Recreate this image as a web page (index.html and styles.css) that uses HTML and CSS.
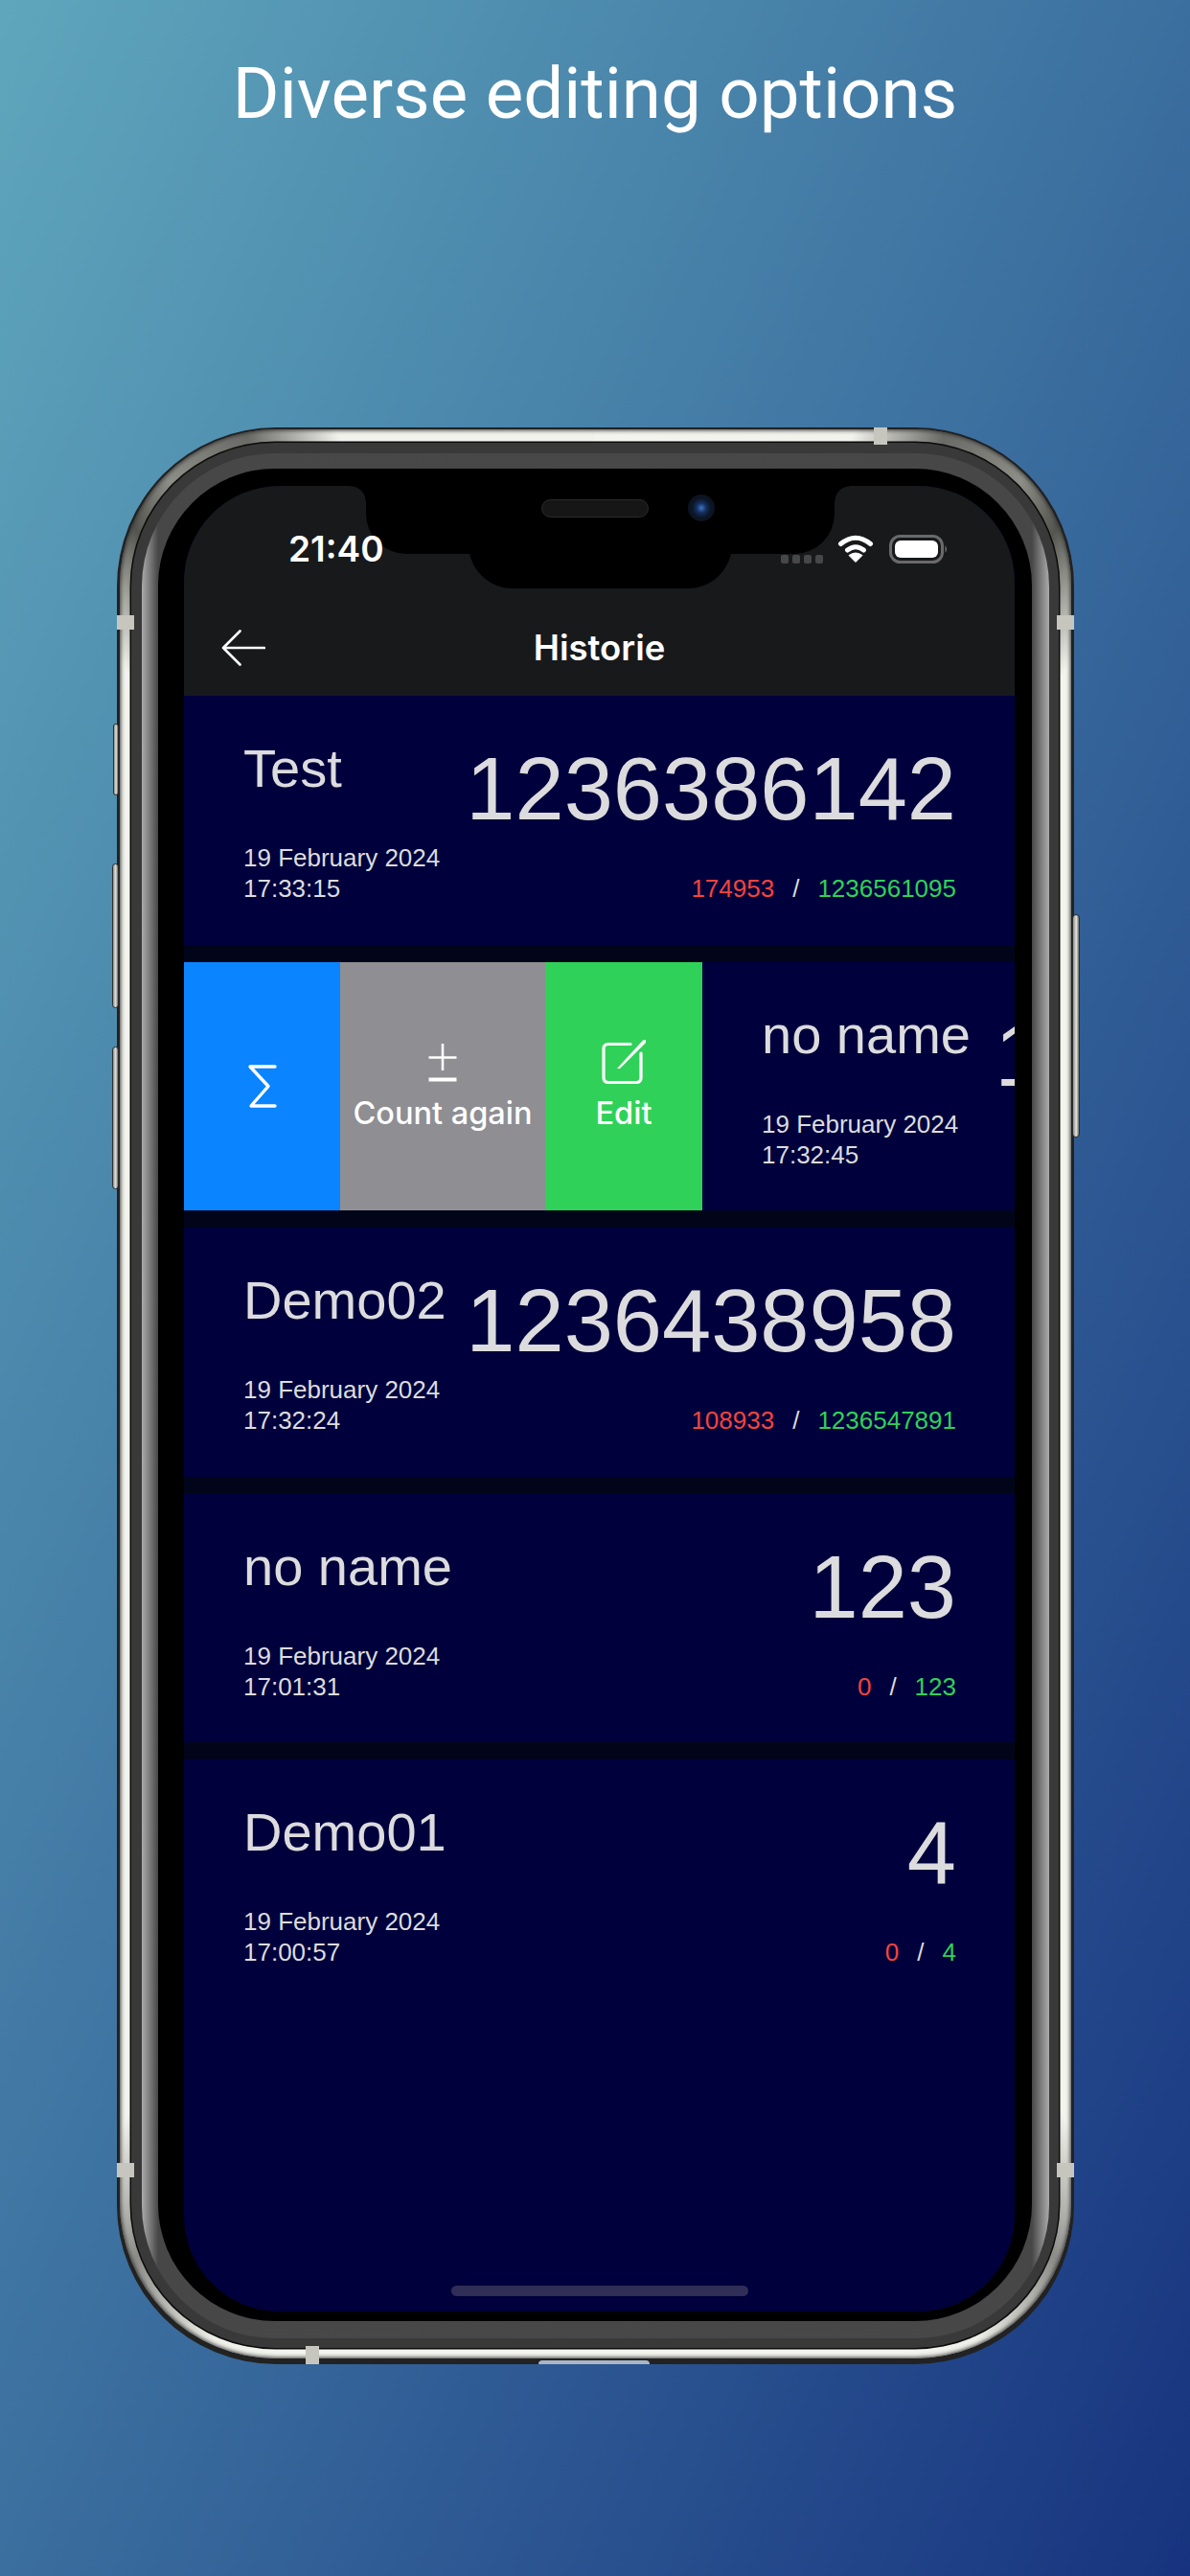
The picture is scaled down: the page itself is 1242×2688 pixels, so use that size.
FILE: index.html
```html
<!DOCTYPE html>
<html lang="en">
<head>
<meta charset="utf-8">
<title>Diverse editing options</title>
<link rel="stylesheet" href="styles.css">
</head>
<body>
<h1 class="headline">Diverse editing options</h1>
<div class="device">
  <span class="side-btn side-btn--mute"></span>
  <span class="side-btn side-btn--up"></span>
  <span class="side-btn side-btn--down"></span>
  <span class="side-btn side-btn--power"></span>
  <div class="rim">
    <div class="steel">
      <div class="ring">
        <div class="bezel">
          <div class="glass">
            <div class="screen">
              <div class="notch">
                <div class="notch-chin"></div>
                <span class="speaker"></span>
                <span class="camera"></span>
              </div>
              <header class="topbar">
                <div class="status">
                  <span class="clock">21:40</span>
                  <div class="status-icons">
                    <div class="signal"><i></i><i></i><i></i><i></i></div>
                    <svg class="wifi" width="38" height="29" viewBox="0 0 38 29"><path d="M3.5 9.5Q19-3 34.500 9.500" fill="none" stroke="#fff" stroke-width="5" stroke-linecap="round"/><path d="M10.500 16Q19 9.500 27.500 16" fill="none" stroke="#fff" stroke-width="5" stroke-linecap="round"/><path d="M19 28.500L12 21.500Q19 16.500 26 21.500Z" fill="#fff" stroke="#fff" stroke-linejoin="round"/></svg>
                    <svg class="battery" width="62" height="30" viewBox="0 0 62 30"><rect x="1.500" y="1.500" width="54" height="27" rx="10" fill="none" stroke="#6a6a6c" stroke-width="3"/><rect x="6" y="6" width="45" height="18" rx="6" fill="#fff"/><path d="M58.500 11Q61.500 15 58.500 19Z" fill="#77777a"/></svg>
                  </div>
                </div>
                <nav class="navbar">
                  <svg class="back" width="46" height="38" viewBox="0 0 46 38"><path d="M45 19H2M19.500 1.500L2 19L19.500 36.500" fill="none" stroke="#fff" stroke-width="2.600" stroke-linecap="round" stroke-linejoin="round"/></svg>
                  <span class="title">Historie</span>
                </nav>
              </header>
              <main class="list">
                <article class="row">
                  <div class="cell">
                    <div class="meta"><div class="name">Test</div><div class="stamp">19 February 2024</div><div class="stamp">17:33:15</div></div>
                    <div class="totals"><div class="total">1236386142</div><div class="split"><span class="minus">174953</span><span class="sep">/</span><span class="plus">1236561095</span></div></div>
                  </div>
                </article>
                <article class="row">
                  <button class="action action--sum">
                    <svg width="30" height="46" viewBox="0 0 30 46"><path d="M28 3H2L21 23.500L3 44H28" fill="none" stroke="#fff" stroke-width="3.400" stroke-linecap="round" stroke-linejoin="round"/></svg>
                  </button>
                  <button class="action action--again">
                    <svg class="action-icon" width="32" height="50" viewBox="0 0 32 50"><path d="M16 5V33M1.500 19.500H30.500" fill="none" stroke="#fff" stroke-width="2.600"/><path d="M1.500 42.500H30.500" fill="none" stroke="#fff" stroke-width="4"/></svg>
                    <span class="action-label">Count again</span>
                  </button>
                  <button class="action action--edit">
                    <svg class="action-icon action-icon--edit" width="48" height="50" viewBox="0 0 48 50"><path d="M31 5.500H8Q3 5.500 3 10.500V40.500Q3 45.500 8 45.500H37Q42 45.500 42 40.500V15" fill="none" stroke="#fff" stroke-width="3.200" stroke-linecap="round"/><path d="M17 31L44 1.500L47 1L47 4L20 31Z" fill="#fff"/></svg>
                    <span class="action-label">Edit</span>
                  </button>
                  <div class="cell cell--swiped">
                    <div class="meta"><div class="name">no name</div><div class="stamp">19 February 2024</div><div class="stamp">17:32:45</div></div>
                    <div class="totals"><div class="total">1236386142</div><div class="split"><span class="minus">174953</span><span class="sep">/</span><span class="plus">1236561095</span></div></div>
                  </div>
                </article>
                <article class="row">
                  <div class="cell">
                    <div class="meta"><div class="name">Demo02</div><div class="stamp">19 February 2024</div><div class="stamp">17:32:24</div></div>
                    <div class="totals"><div class="total">1236438958</div><div class="split"><span class="minus">108933</span><span class="sep">/</span><span class="plus">1236547891</span></div></div>
                  </div>
                </article>
                <article class="row">
                  <div class="cell">
                    <div class="meta"><div class="name">no name</div><div class="stamp">19 February 2024</div><div class="stamp">17:01:31</div></div>
                    <div class="totals"><div class="total">123</div><div class="split"><span class="minus">0</span><span class="sep">/</span><span class="plus">123</span></div></div>
                  </div>
                </article>
                <article class="row">
                  <div class="cell">
                    <div class="meta"><div class="name">Demo01</div><div class="stamp">19 February 2024</div><div class="stamp">17:00:57</div></div>
                    <div class="totals"><div class="total">4</div><div class="split"><span class="minus">0</span><span class="sep">/</span><span class="plus">4</span></div></div>
                  </div>
                </article>
              </main>
              <div class="home-bar"></div>
            </div>
          </div>
        </div>
      </div>
    </div>
  </div>
  <span class="band band--top"></span>
  <span class="band band--bottom"></span>
  <span class="band band--lt"></span>
  <span class="band band--rt"></span>
  <span class="band band--lb"></span>
  <span class="band band--rb"></span>
  <span class="port"></span>
</div>
</body>
</html>
```
FILE: styles.css
```css
* { box-sizing: border-box; }
html, body { margin: 0; padding: 0; }
body {
  width: 1242px;
  height: 2688px;
  overflow: hidden;
  background: linear-gradient(to bottom right, #5fa6bc 0%, #3b6f9f 50%, #17337f 100%);
  font-family: "Liberation Sans", Arial, sans-serif;
}
.headline {
  margin: 0;
  padding-top: 53px;
  font: 400 74.5px/90px Roboto, "Liberation Sans", sans-serif;
  color: #fff;
  text-align: center;
}
.device {
  position: relative;
  width: 999px;
  height: 2021px;
  margin: 303px 0 0 122px;
}
.rim {
  height: 100%;
  padding: 2px 3px 6px;
  border-radius: 166px;
  background: #222;
}
.steel {
  height: 100%;
  padding: 14px 13px 11px 12px;
  border-radius: 163px;
  background: conic-gradient(#f4f4ef 0deg, #f2f2ed 15deg, #6a6a66 20deg, #8e8e88 25deg, #55554f 28deg, #f4f4ef 33deg, #f4f4ef 147deg, #8c8c88 152deg, #efefe9 158deg, #f4f4ef 162deg, #f4f4ef 198deg, #efefe9 202deg, #8c8c88 208deg, #f4f4ef 213deg, #f4f4ef 327deg, #55554f 332deg, #8e8e88 335deg, #6a6a66 340deg, #f2f2ed 345deg);
  box-shadow: inset 0 0 4px 1px #333;
}
.ring {
  height: 100%;
  padding: 11px 10px 10px 11px;
  border-radius: 150px;
  background: #393939;
  box-shadow: 0 0 0 1.500px #0b0b0b;
}
.bezel {
  height: 100%;
  padding: 16px 18px 18px 17px;
  border-radius: 139px;
  background: linear-gradient(to right, #ababab 0, #474747 17px, #484848 50%, #474747 calc(100% - 18px), #ababab 100%);
}
.glass {
  height: 100%;
  padding: 18px 18px 10px 27px;
  border-radius: 122px;
  background: #000;
}
.screen {
  position: relative;
  display: flex;
  flex-direction: column;
  height: 100%;
  overflow: hidden;
  border-radius: 100px;
  background: #00003c;
}
.notch {
  position: absolute;
  top: 0;
  left: 190px;
  width: 489px;
  height: 71px;
  border-radius: 0 0 42px 42px;
  background: #000;
}
.notch::before,
.notch::after {
  content: "";
  position: absolute;
  top: 0;
  width: 16px;
  height: 16px;
}
.notch::before {
  left: -16px;
  background: radial-gradient(circle at 0 100%, transparent 15px, #000 16px);
}
.notch::after {
  right: -16px;
  background: radial-gradient(circle at 100% 100%, transparent 15px, #000 16px);
}
.notch-chin {
  position: absolute;
  top: 30px;
  left: 107px;
  width: 275px;
  height: 77px;
  border-radius: 0 0 46px 46px;
  background: #000;
}
.speaker {
  position: absolute;
  top: 14px;
  left: 183px;
  width: 112px;
  height: 19px;
  border-radius: 10px;
  border: 1px solid #2b2b2d;
  background: #161617;
}
.camera {
  position: absolute;
  top: 9px;
  left: 336px;
  width: 28px;
  height: 28px;
  border-radius: 50%;
  background: radial-gradient(circle, #3f74c4 0, #143061 25%, #0c1624 50%, #0a0e16 100%);
}
.topbar {
  flex: none;
  height: 219px;
  background: #18191b;
  border-bottom: 1px solid #14143e;
}
.status {
  display: flex;
  justify-content: space-between;
  align-items: flex-start;
  height: 110px;
  padding: 46px 69px 0 109px;
}
.clock {
  position: relative;
  font: 600 37px/40px Inter, "Liberation Sans", sans-serif;
  color: #fff;
}
.status-icons {
  position: relative;
  display: flex;
  align-items: flex-start;
  margin-top: 7px;
}
.signal {
  display: flex;
  gap: 4px;
  margin-top: 19px;
  margin-right: 15px;
}
.signal i {
  display: block;
  width: 8px;
  height: 9px;
  border-radius: 2px;
  background: #47474a;
}
.wifi { margin-right: 16px; margin-top: -2px; }
.battery { margin-top: -2px; }
.navbar {
  display: grid;
  grid-template-columns: 1fr auto 1fr;
  align-items: center;
  height: 108px;
  padding: 10px 0 0;
  position: relative;
}
.back { margin-left: 39px; }
.title {
  font: 600 36.500px/44px Inter, "Liberation Sans", sans-serif;
  color: #fff;
}
.list {
  flex: none;
  display: flex;
  flex-direction: column;
  gap: 18px;
  background: #02051a;
}
.row {
  display: flex;
  height: 259.5px;
  overflow: hidden;
  background: #00003c;
}
.cell {
  flex: none;
  display: flex;
  justify-content: space-between;
  width: 867px;
  padding: 0 61px 0 62px;
  color: #dcdcde;
}
.cell--swiped { padding: 0 50px 0 62px; }
.name {
  margin-top: 44px;
  margin-bottom: 45px;
  font-size: 56px;
  line-height: 64px;
  white-space: nowrap;
}
.stamp {
  font-size: 26px;
  line-height: 32px;
  white-space: nowrap;
}
.totals { text-align: right; }
.total {
  margin-top: 47px;
  margin-bottom: 38px;
  font-size: 92px;
  line-height: 100px;
  white-space: nowrap;
}
.split {
  display: flex;
  justify-content: flex-end;
  gap: 19px;
  font-size: 26px;
  line-height: 32px;
}
.minus { color: #f5443c; }
.plus { color: #30d158; }
.action {
  flex: none;
  display: flex;
  flex-direction: column;
  align-items: center;
  justify-content: center;
  margin: 0;
  padding: 0;
  border: 0;
  color: #fff;
}
.action--sum { width: 163px; background: #0a84ff; }
.action--again { width: 214px; background: #8e8e93; }
.action--edit { width: 164px; background: #30d158; }
.action-icon { margin-bottom: 8px; }
.action-icon--edit { position: relative; }
.action-label {
  font: 500 32.500px/40px Inter, "Liberation Sans", sans-serif;
  white-space: nowrap;
}
.home-bar {
  flex: none;
  width: 310px;
  height: 11px;
  margin: auto auto 16px;
  border-radius: 6px;
  background: #302e57;
}
.side-btn {
  position: absolute;
  border-radius: 4px;
  border: 1px solid #2e2e2e;
  background: linear-gradient(to right, #8b8b88, #e4e4df 55%, #6b6b68);
}
.side-btn--mute { left: -4px; top: 309px; width: 6px; height: 75px; }
.side-btn--up { left: -5px; top: 455px; width: 7px; height: 151px; }
.side-btn--down { left: -5px; top: 646px; width: 7px; height: 149px; }
.side-btn--power { right: -6px; top: 508px; width: 8px; height: 233px; }
.band {
  position: absolute;
  background: #c6c6be;
}
.band--top { left: 790px; top: 0; width: 14px; height: 18px; }
.band--bottom { left: 197px; top: 2002px; width: 14px; height: 19px; }
.band--lt { left: 0; top: 196px; width: 18px; height: 15px; }
.band--rt { right: 0; top: 196px; width: 18px; height: 15px; }
.band--lb { left: 0; top: 1811px; width: 18px; height: 15px; }
.band--rb { right: 0; top: 1811px; width: 18px; height: 15px; }
.port {
  position: absolute;
  left: 440px;
  top: 2017px;
  width: 116px;
  height: 4px;
  border-radius: 12px 12px 0 0;
  background: #a9b6c8;
}
```
